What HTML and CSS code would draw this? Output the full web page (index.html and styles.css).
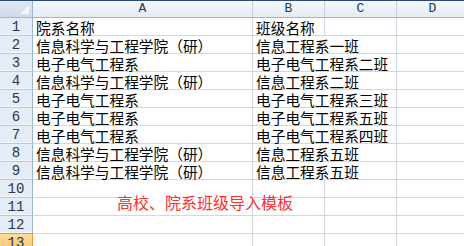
FILE: index.html
```html
<!DOCTYPE html>
<html lang="zh">
<head>
<meta charset="utf-8">
<link rel="stylesheet" href="styles.css">
</head>
<body>
<div class="sheet">
  <div class="grid">
    <div class="corner"><span class="tri"></span></div>
    <div class="colhead">A</div>
    <div class="colhead">B</div>
    <div class="colhead">C</div>
    <div class="colhead">D</div>

    <div class="rowhead">1</div>
    <div class="cell">院系名称</div>
    <div class="cell">班级名称</div>
    <div class="cell"></div>
    <div class="cell"></div>

    <div class="rowhead">2</div>
    <div class="cell">信息科学与工程学院（研）</div>
    <div class="cell spill">信息工程系一班</div>
    <div class="cell"></div>
    <div class="cell"></div>

    <div class="rowhead">3</div>
    <div class="cell">电子电气工程系</div>
    <div class="cell spill">电子电气工程系二班</div>
    <div class="cell"></div>
    <div class="cell"></div>

    <div class="rowhead">4</div>
    <div class="cell">信息科学与工程学院（研）</div>
    <div class="cell spill">信息工程系二班</div>
    <div class="cell"></div>
    <div class="cell"></div>

    <div class="rowhead">5</div>
    <div class="cell">电子电气工程系</div>
    <div class="cell spill">电子电气工程系三班</div>
    <div class="cell"></div>
    <div class="cell"></div>

    <div class="rowhead">6</div>
    <div class="cell">电子电气工程系</div>
    <div class="cell spill">电子电气工程系五班</div>
    <div class="cell"></div>
    <div class="cell"></div>

    <div class="rowhead">7</div>
    <div class="cell">电子电气工程系</div>
    <div class="cell spill">电子电气工程系四班</div>
    <div class="cell"></div>
    <div class="cell"></div>

    <div class="rowhead">8</div>
    <div class="cell">信息科学与工程学院（研）</div>
    <div class="cell spill">信息工程系五班</div>
    <div class="cell"></div>
    <div class="cell"></div>

    <div class="rowhead">9</div>
    <div class="cell">信息科学与工程学院（研）</div>
    <div class="cell spill">信息工程系五班</div>
    <div class="cell"></div>
    <div class="cell"></div>

    <div class="rowhead">10</div>
    <div class="cell"></div>
    <div class="cell"></div>
    <div class="cell"></div>
    <div class="cell"></div>

    <div class="rowhead">11</div>
    <div class="cell"></div>
    <div class="cell"></div>
    <div class="cell"></div>
    <div class="cell"></div>

    <div class="rowhead">12</div>
    <div class="cell"></div>
    <div class="cell"></div>
    <div class="cell"></div>
    <div class="cell"></div>

    <div class="rowhead selected">13</div>
    <div class="cell"></div>
    <div class="cell"></div>
    <div class="cell"></div>
    <div class="cell"></div>
  </div>
  <div class="textbox">高校、院系班级导入模板</div>
</div>
</body>
</html>
```

FILE: styles.css
```css
html, body {
  margin: 0;
  padding: 0;
  background: #ffffff;
  overflow: hidden;
}

.sheet {
  position: relative;
  width: 464px;
  height: 246px;
  overflow: hidden;
  border-top: 1px solid #2c4a7c;
  box-sizing: border-box;
}

.grid {
  display: grid;
  grid-template-columns: 33px 220px 72px 72px 72px;
  grid-template-rows: 17px repeat(13, 18px);
}

.corner {
  position: relative;
  background: linear-gradient(#dfe8f5, #cfdaea);
  border-right: 1px solid #9eb6ce;
  border-bottom: 1px solid #9eb6ce;
  box-sizing: border-box;
}

.tri {
  position: absolute;
  right: 3px;
  bottom: 3px;
  width: 0;
  height: 0;
  border-left: 9px solid transparent;
  border-bottom: 9px solid #f4f6f9;
}

.colhead {
  background: linear-gradient(#f6f9fd, #e3eaf4);
  border-right: 1px solid #c3d0e0;
  border-bottom: 1px solid #9eb6ce;
  box-sizing: border-box;
  font-family: "Liberation Mono", monospace;
  font-size: 13px;
  line-height: 16px;
  color: #27364e;
  text-align: center;
}

.rowhead {
  background: #e4ecf7;
  border-right: 1px solid #9eb6ce;
  border-bottom: 1px solid #b9c9dc;
  box-shadow: inset 0 -1px 0 #f3f6fa;
  box-sizing: border-box;
  font-family: "Liberation Mono", monospace;
  font-size: 14px;
  line-height: 18px;
  color: #27364e;
  text-align: center;
}

.rowhead.selected {
  background: linear-gradient(#fbdc9c, #f6c56a);
  border-top: 1px solid #f29536;
  border-right: 1px solid #f29536;
  box-shadow: none;
  margin-top: -1px;
}

.cell {
  border-right: 1px solid #d0d7e5;
  border-bottom: 1px solid #d0d7e5;
  box-sizing: border-box;
  padding: 2px 0 0 3px;
  font-family: "Noto Sans CJK SC", sans-serif;
  font-size: 14.7px;
  line-height: 15px;
  color: #000000;
  white-space: nowrap;
  overflow: visible;
}

.cell.spill {
  border-right-color: transparent;
}

.textbox {
  position: absolute;
  left: 117px;
  top: 191px;
  width: 134px;
  background: #ffffff;
  font-family: "Noto Sans CJK SC", sans-serif;
  font-size: 16px;
  line-height: 20px;
  color: #ff2d2d;
  white-space: nowrap;
}
```
